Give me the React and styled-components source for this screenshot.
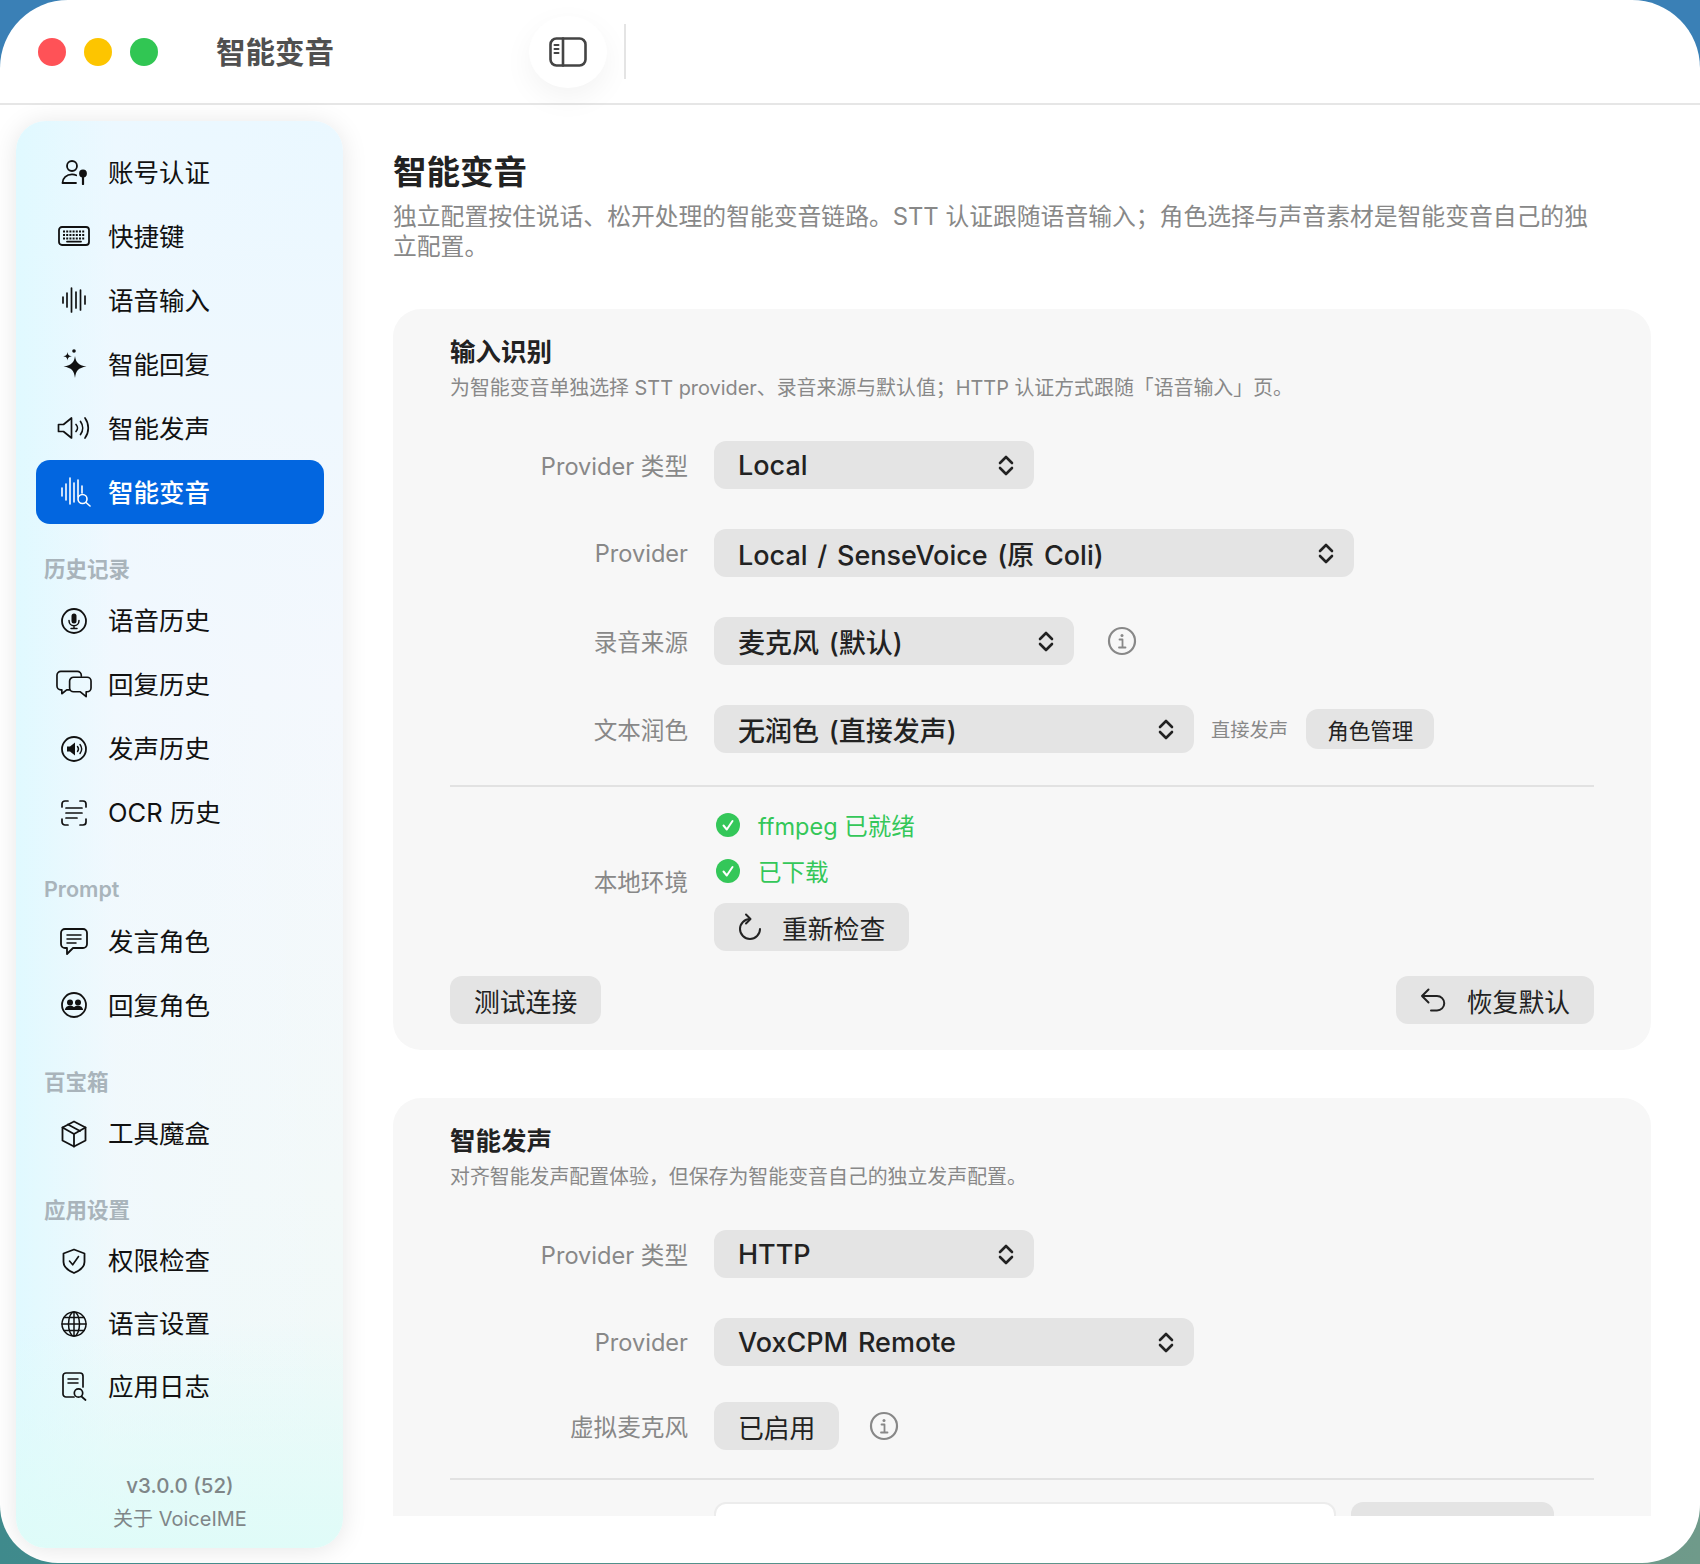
import React from 'react'
import styled, { createGlobalStyle } from 'styled-components'

const GlobalStyle = createGlobalStyle`
  html, body {
    margin: 0;
    padding: 0;
  }
  body {
    width: 1700px;
    height: 1564px;
    overflow: hidden;
    font-family: Inter, "Noto Sans CJK SC", sans-serif;
    background:
      linear-gradient(180deg, #3a80b6 0 50%, transparent 50%),
      linear-gradient(90deg, #3f8a8c, #6f9a8a);
  }
`

const Window = styled.div`
  width: 1700px;
  height: 1563px;
  display: flex;
  flex-direction: column;
  background: #fff;
  border-radius: 68px 68px 58px 58px;
  overflow: hidden;
`

const TitleBar = styled.header`
  height: 103px;
  flex: none;
  display: flex;
  align-items: center;
  padding-left: 38px;
  border-bottom: 2px solid #e6e6e6;
`

const Lights = styled.div`
  display: flex;
  gap: 18px;
`

const Light = styled.span`
  width: 28px;
  height: 28px;
  border-radius: 50%;
  background: ${p => p.$color};
`

const WindowTitle = styled.div`
  width: 118px;
  margin: 0 0 4px 58px;
  font-size: 29.5px;
  font-weight: 600;
  color: #505050;
  white-space: nowrap;
`

const ToggleButton = styled.div`
  width: 78px;
  height: 72px;
  margin-left: 195px;
  display: flex;
  align-items: center;
  justify-content: center;
  background: #fff;
  border-radius: 50%;
  box-shadow: 0 10px 30px rgba(0, 0, 0, 0.05);
`

const TitleDivider = styled.div`
  width: 2px;
  height: 55px;
  margin-left: 17px;
  background: #e4e4e4;
`

const Body = styled.div`
  flex: 1;
  display: flex;
  min-height: 0;
`

const Sidebar = styled.aside`
  width: 327px;
  height: 1427px;
  flex: none;
  margin: 16px 0 0 16px;
  padding: 19px 19px 0 20px;
  box-sizing: border-box;
  display: flex;
  flex-direction: column;
  border-radius: 30px;
  background:
    linear-gradient(0deg, rgba(222, 252, 248, 0.9) 0%, rgba(228, 250, 248, 0) 16%),
    linear-gradient(90deg, rgba(224, 249, 255, 1) 0%, rgba(238, 248, 255, 0.5) 30%, rgba(247, 248, 250, 0) 100%),
    linear-gradient(180deg, #eaf8ff 0%, #f4f8fd 40%, #f3f9f9 75%, #eef9f8 100%);
  box-shadow: 0 2px 26px rgba(0, 0, 0, 0.1);
`

const NavItem = styled.div`
  height: ${p => (p.$compact ? 63 : 64)}px;
  flex: none;
  display: flex;
  align-items: center;
  border-radius: 14px;
  font-size: 25.5px;
  color: ${p => (p.$active ? '#fff' : '#111')};
  background: ${p => (p.$active ? '#0266e0' : 'transparent')};
  font-weight: ${p => (p.$active ? 500 : 400)};
`

const NavIcon = styled.span`
  width: 36px;
  margin: 0 16px 0 20px;
  display: flex;
  justify-content: center;
  flex: none;
`

const NavText = styled.span`
  margin-bottom: 3.5px;
`

const SectionLabel = styled.div`
  height: 30px;
  margin: 29.5px 0 ${p => (p.$compact ? 4 : 5)}px 8px;
  font-size: 21.5px;
  line-height: 30px;
  font-weight: 600;
  color: #a9b4bb;
`

const SidebarFooter = styled.div`
  margin-top: auto;
  padding-bottom: 15px;
  display: flex;
  flex-direction: column;
  align-items: center;
  gap: 5px;
`

const Version = styled.div`
  font-size: 20.5px;
  line-height: 28px;
  font-weight: 500;
  color: #7f8688;
`

const About = styled.div`
  font-size: 20px;
  line-height: 28px;
  color: #7f8688;
`

const Main = styled.main`
  width: 1258px;
  height: 1411px;
  margin-left: 50px;
  padding-top: 45px;
  box-sizing: border-box;
  overflow: hidden;
`

const PageTitle = styled.h1`
  margin: 0;
  font-size: 33.5px;
  line-height: 44px;
  font-weight: 700;
  color: #222;
`

const Description = styled.p`
  max-width: 1205px;
  margin: 7.5px 0 47.5px;
  font-size: 23.8px;
  line-height: 30px;
  color: #888;
`

const Card = styled.section`
  padding: 25px 57px 26px;
  margin-bottom: 48px;
  background: #f7f7f7;
  border-radius: 28px;
`

const CardTitle = styled.h2`
  margin: 0;
  font-size: 25.5px;
  line-height: 36px;
  font-weight: 700;
  color: #222;
`

const CardHint = styled.p`
  margin: 4px 0 39px;
  font-size: 19.9px;
  line-height: 28px;
  color: #888;
`

const Row = styled.div`
  display: flex;
  align-items: center;
  margin-top: ${p => p.$top ?? 0}px;
  margin-bottom: ${p => p.$gap ?? 40}px;
`

const Label = styled.div`
  width: 238px;
  margin: ${p => p.$offset ?? 0}px 26px 0 0;
  flex: none;
  text-align: right;
  font-size: 23.6px;
  color: #888;
`

const SelectBox = styled.div`
  width: ${p => p.$width}px;
  height: 48px;
  box-sizing: border-box;
  padding: 0 20px 0 24px;
  display: flex;
  align-items: center;
  justify-content: space-between;
  flex: none;
  background: #e4e4e4;
  border-radius: 12px;
  font-size: 27px;
  word-spacing: 2.5px;
  font-weight: 500;
  color: #222;
`

const Pill = styled.div`
  height: ${p => p.$height ?? 48}px;
  padding: 0 ${p => p.$pad ?? 24}px;
  display: inline-flex;
  align-items: center;
  gap: 20px;
  box-sizing: border-box;
  flex: none;
  background: #e4e4e4;
  border-radius: 12px;
  font-size: ${p => p.$size ?? 25.8}px;
  color: #222;
`

const InfoIcon = styled.span`
  display: flex;
  margin-left: ${p => p.$left}px;
`

const SideNote = styled.span`
  margin: 0 18px 0 17px;
  font-size: 19.3px;
  color: #888;
`

const Divider = styled.hr`
  height: 2px;
  margin: 0;
  border: 0;
  background: #e2e2e2;
`

const EnvList = styled.div`
  display: flex;
  flex-direction: column;
  align-items: flex-start;
`

const EnvStatus = styled.div`
  height: 34px;
  margin-bottom: ${p => p.$gap}px;
  padding-left: 2px;
  display: flex;
  align-items: center;
  gap: 18px;
  font-size: 23.5px;
  color: #34c759;
`

const Actions = styled.div`
  display: flex;
  justify-content: space-between;
`

const FieldRow = styled.div`
  margin: 22px 0 0 264px;
  display: flex;
  gap: 15px;
`

const TextInput = styled.div`
  width: 622px;
  height: 48px;
  box-sizing: border-box;
  background: #fff;
  border: 2px solid #ececec;
  border-radius: 12px;
`

const GhostButton = styled.div`
  width: 203px;
  height: 48px;
  background: #e4e4e4;
  border-radius: 12px;
`

const Icon = ({ w = 26, h = 26, children, sw = 1.8, color = 'currentColor' }) => (
  <svg width={w} height={h} viewBox={`0 0 ${w} ${h}`} fill='none' stroke={color} strokeWidth={sw} strokeLinecap='round' strokeLinejoin='round'>
    {children}
  </svg>
)

const Bars = ({ bars }) => bars.map(([x, y1, y2]) => <line key={x} x1={x} x2={x} y1={y1} y2={y2} />)

const icons = {
  account: (
    <Icon w={28} h={26}>
      <circle cx='12' cy='7' r='5' />
      <path d='M2.5 24H16M2.5 24c0-5 4-8.6 9.5-8.6 1.7 0 3 .3 4.2.9' />
      <circle cx='23' cy='14.5' r='3' fill='currentColor' />
      <path d='M23 17v8' strokeWidth='2.2' />
    </Icon>
  ),
  keyboard: (
    <Icon w={32} h={20}>
      <rect x='1' y='1' width='30' height='18' rx='3' />
      <path d='M5 5.6h22M5 9h22M5 12.4h22' strokeDasharray='2 1.2' strokeLinecap='butt' strokeWidth='2' />
      <path d='M9 15.6h14' />
    </Icon>
  ),
  wave: (
    <Icon w={24} h={26} sw={1.7}>
      <Bars bars={[[1, 10, 16], [5, 6, 20], [9.5, 1, 25], [14, 5, 21], [18.5, 3, 23], [23, 9, 17]]} />
    </Icon>
  ),
  sparkles: (
    <svg width='26' height='30' viewBox='0 0 26 30' fill='currentColor'>
      <path d='M14 7c1 6.4 3 9 11.5 10.5-8.5 1.5-10.5 4.1-11.5 11.5-1-7.4-3-10-11.5-11.5C11 16 13 13.4 14 7z' />
      <path d='M6.5 3c.4 2.8 1.2 3.8 4.3 4.3-3.1.5-3.9 1.5-4.3 4.3-.4-2.8-1.2-3.8-4.3-4.3C5.3 6.8 6.1 5.8 6.5 3z' />
      <circle cx='13' cy='2' r='1.8' />
    </svg>
  ),
  speaker: (
    <Icon w={35} h={24} sw={1.7}>
      <path d='M1.5 8.5H6.5L14.5 2V22L6.5 15.5H1.5Z' />
      <path d='M19 8.5a5 5 0 0 1 0 7M23.5 5.5a11 11 0 0 1 0 13M28 2a17 17 0 0 1 0 20' />
    </Icon>
  ),
  voiceChange: (
    <Icon w={36} h={30} sw={1.6}>
      <g transform='translate(5 0)'>
        <Bars bars={[[1, 11, 19], [5, 7, 23], [9, 1, 27], [13, 6, 25], [17, 3, 20]]} />
        <circle cx='21.5' cy='22' r='4.5' />
        <path d='M25 25.5l4 3.5' />
        <path d='M21 9v7' />
      </g>
    </Icon>
  ),
  micCircle: (
    <Icon>
      <circle cx='13' cy='13' r='12' />
      <rect x='10.5' y='5.5' width='5' height='10' rx='2.5' fill='currentColor' stroke='none' />
      <path d='M8 12.5c0 3.2 2.2 5.3 5 5.3s5-2.1 5-5.3M13 18v2M10 20.5h6' strokeWidth='1.5' />
    </Icon>
  ),
  bubbles: (
    <Icon w={37} h={29} sw={1.7}>
      <path d='M26 6V5a4 4 0 0 0-4-4H5a4 4 0 0 0-4 4v11a4 4 0 0 0 4 4h1v4l5-4h3' />
      <path d='M18 7h14a4 4 0 0 1 4 4v7a4 4 0 0 1-4 4h-1v5l-6-5h-7a4 4 0 0 1-4-4v-7a4 4 0 0 1 4-4z' />
    </Icon>
  ),
  speakerCircle: (
    <Icon>
      <circle cx='13' cy='13' r='12' />
      <path d='M6 10.5h3L14 6.5v13L9 15.5H6z' fill='currentColor' stroke='none' />
      <path d='M16.5 10.5a4 4 0 0 1 0 5M19 8.5a7.5 7.5 0 0 1 0 9' strokeWidth='1.4' />
    </Icon>
  ),
  textScan: (
    <Icon sw={1.7}>
      <path d='M1 7V4a3 3 0 0 1 3-3h3M19 1h3a3 3 0 0 1 3 3v3M25 19v3a3 3 0 0 1-3 3h-3M7 25H4a3 3 0 0 1-3-3v-3' />
      <path d='M5 8h16M5 13h16M5 18h11' />
    </Icon>
  ),
  bubbleLines: (
    <Icon w={28} h={27}>
      <path d='M5 1h18a4 4 0 0 1 4 4v11a4 4 0 0 1-4 4H13l-6 6v-6H5a4 4 0 0 1-4-4V5a4 4 0 0 1 4-4z' />
      <path d='M7 7h14M7 11h14M7 15h9' strokeWidth='1.5' />
    </Icon>
  ),
  peopleCircle: (
    <Icon>
      <circle cx='13' cy='13' r='12' />
      <g fill='currentColor' stroke='none'>
        <circle cx='9' cy='10.5' r='3' />
        <circle cx='17' cy='10.5' r='3' />
        <path d='M3.8 18c.4-2.7 2.5-4.2 5.2-4.2 1.5 0 2.9.5 4 1.4 1.1-.9 2.5-1.4 4-1.4 2.7 0 4.8 1.5 5.2 4.2z' />
      </g>
    </Icon>
  ),
  cube: (
    <Icon h={28}>
      <path d='M13 1.5L24.5 7.5V20.5L13 26.5L1.5 20.5V7.5Z' />
      <path d='M1.5 7.5L13 14L24.5 7.5M13 14V26.5M7 4.5L19 11' />
    </Icon>
  ),
  shield: (
    <Icon w={24} h={26}>
      <path d='M12 1.5L22.5 5.5V14C22.5 19 18 22.5 12 25 6 22.5 1.5 19 1.5 14V5.5Z' />
      <path d='M7.5 13l3.2 3.8L16.5 8.5' strokeWidth='1.6' />
    </Icon>
  ),
  globe: (
    <Icon sw={1.5}>
      <circle cx='13' cy='13' r='12' />
      <ellipse cx='13' cy='13' rx='5.5' ry='12' />
      <path d='M13 1v24M1 13h24M3 6.5h20M3 19.5h20' />
    </Icon>
  ),
  docSearch: (
    <Icon w={25} h={29} sw={1.7}>
      <path d='M12 25H4a3 3 0 0 1-3-3V4a3 3 0 0 1 3-3h14a3 3 0 0 1 3 3v11' />
      <path d='M6 7h10M6 11h10' strokeWidth='1.5' />
      <circle cx='16.5' cy='21' r='4.2' />
      <path d='M19.5 24.5l4 3.5' />
    </Icon>
  )
}

const Chevrons = () => (
  <Icon w={16} h={21} sw={2.6} color='#222'>
    <path d='M2 8L8 2L14 8M2 13L8 19L14 13' />
  </Icon>
)

const Info = () => (
  <Icon w={30} h={30} sw={2.2} color='#888'>
    <circle cx='15' cy='15' r='13' />
    <circle cx='15' cy='9.5' r='1.5' fill='#888' stroke='none' />
    <path d='M12.5 13.5H15.5V21M12 21.5H18.5' strokeWidth='1.8' />
  </Icon>
)

const SidebarToggle = () => (
  <Icon w={38} h={30} sw={2.6} color='#444'>
    <rect x='1.5' y='1.5' width='35' height='27' rx='6' />
    <path d='M14 1.5V28.5' />
    <path d='M5.5 8H9.5M5.5 12H9.5M5.5 16H9.5' strokeWidth='2' />
  </Icon>
)

const Refresh = () => (
  <Icon w={24} h={28} sw={2}>
    <path d='M12 6A10 10 0 1 0 22 16' />
    <path d='M8 1.5L12.5 6L8 10.5' />
  </Icon>
)

const Undo = () => (
  <Icon w={27} h={24} sw={2}>
    <path d='M8.5 1.5L2 8L8.5 14.5M2 8H17A7 7 0 0 1 17 22.5H11' />
  </Icon>
)

const CheckBadge = () => (
  <svg width='24' height='24' viewBox='0 0 24 24'>
    <circle cx='12' cy='12' r='12' fill='#34c759' />
    <path d='M7.5 12.5L10.8 16.5L16.5 8' fill='none' stroke='#fff' strokeWidth='2' strokeLinecap='round' strokeLinejoin='round' />
  </svg>
)

const nav = [
  { items: [['account', '账号认证'], ['keyboard', '快捷键'], ['wave', '语音输入'], ['sparkles', '智能回复'], ['speaker', '智能发声'], ['voiceChange', '智能变音']] },
  { title: '历史记录', items: [['micCircle', '语音历史'], ['bubbles', '回复历史'], ['speakerCircle', '发声历史'], ['textScan', 'OCR 历史']] },
  { title: 'Prompt', items: [['bubbleLines', '发言角色'], ['peopleCircle', '回复角色']] },
  { title: '百宝箱', items: [['cube', '工具魔盒']] },
  { title: '应用设置', compact: true, items: [['shield', '权限检查'], ['globe', '语言设置'], ['docSearch', '应用日志']] }
]

const Select = ({ width, children }) => (
  <SelectBox $width={width}>
    <span>{children}</span>
    <Chevrons />
  </SelectBox>
)

export default function App () {
  return (
    <Window>
      <GlobalStyle />
      <TitleBar>
        <Lights>
          <Light $color='#ff5257' />
          <Light $color='#fdc500' />
          <Light $color='#31c653' />
        </Lights>
        <WindowTitle>智能变音</WindowTitle>
        <ToggleButton><SidebarToggle /></ToggleButton>
        <TitleDivider />
      </TitleBar>
      <Body>
        <Sidebar>
          {nav.map((group, i) => (
            <React.Fragment key={i}>
              {group.title && <SectionLabel $compact={group.compact}>{group.title}</SectionLabel>}
              {group.items.map(([icon, text]) => (
                <NavItem key={text} $active={text === '智能变音'} $compact={group.compact}>
                  <NavIcon>{icons[icon]}</NavIcon>
                  <NavText>{text}</NavText>
                </NavItem>
              ))}
            </React.Fragment>
          ))}
          <SidebarFooter>
            <Version>v3.0.0 (52)</Version>
            <About>关于 VoiceIME</About>
          </SidebarFooter>
        </Sidebar>
        <Main>
          <PageTitle>智能变音</PageTitle>
          <Description>独立配置按住说话、松开处理的智能变音链路。STT 认证跟随语音输入；角色选择与声音素材是智能变音自己的独立配置。</Description>
          <Card>
            <CardTitle>输入识别</CardTitle>
            <CardHint>为智能变音单独选择 STT provider、录音来源与默认值；HTTP 认证方式跟随「语音输入」页。</CardHint>
            <Row>
              <Label>Provider 类型</Label>
              <Select width={320}>Local</Select>
            </Row>
            <Row>
              <Label>Provider</Label>
              <Select width={640}>Local / SenseVoice (原 Coli)</Select>
            </Row>
            <Row>
              <Label>录音来源</Label>
              <Select width={360}>麦克风 (默认)</Select>
              <InfoIcon $left={33}><Info /></InfoIcon>
            </Row>
            <Row $gap={32}>
              <Label>文本润色</Label>
              <Select width={480}>无润色 (直接发声)</Select>
              <SideNote>直接发声</SideNote>
              <Pill $height={40} $pad={21} $size={21.5}>角色管理</Pill>
            </Row>
            <Divider />
            <Row $top={21} $gap={25}>
              <Label $offset={3}>本地环境</Label>
              <EnvList>
                <EnvStatus $gap={12}><CheckBadge />ffmpeg 已就绪</EnvStatus>
                <EnvStatus $gap={15}><CheckBadge />已下载</EnvStatus>
                <Pill><Refresh />重新检查</Pill>
              </EnvList>
            </Row>
            <Actions>
              <Pill>测试连接</Pill>
              <Pill><Undo />恢复默认</Pill>
            </Actions>
          </Card>
          <Card>
            <CardTitle>智能发声</CardTitle>
            <CardHint>对齐智能发声配置体验，但保存为智能变音自己的独立发声配置。</CardHint>
            <Row>
              <Label>Provider 类型</Label>
              <Select width={320}>HTTP</Select>
            </Row>
            <Row $gap={36}>
              <Label>Provider</Label>
              <Select width={480}>VoxCPM Remote</Select>
            </Row>
            <Row $gap={28}>
              <Label>虚拟麦克风</Label>
              <Pill>已启用</Pill>
              <InfoIcon $left={30}><Info /></InfoIcon>
            </Row>
            <Divider />
            <FieldRow>
              <TextInput />
              <GhostButton />
            </FieldRow>
          </Card>
        </Main>
      </Body>
    </Window>
  )
}
